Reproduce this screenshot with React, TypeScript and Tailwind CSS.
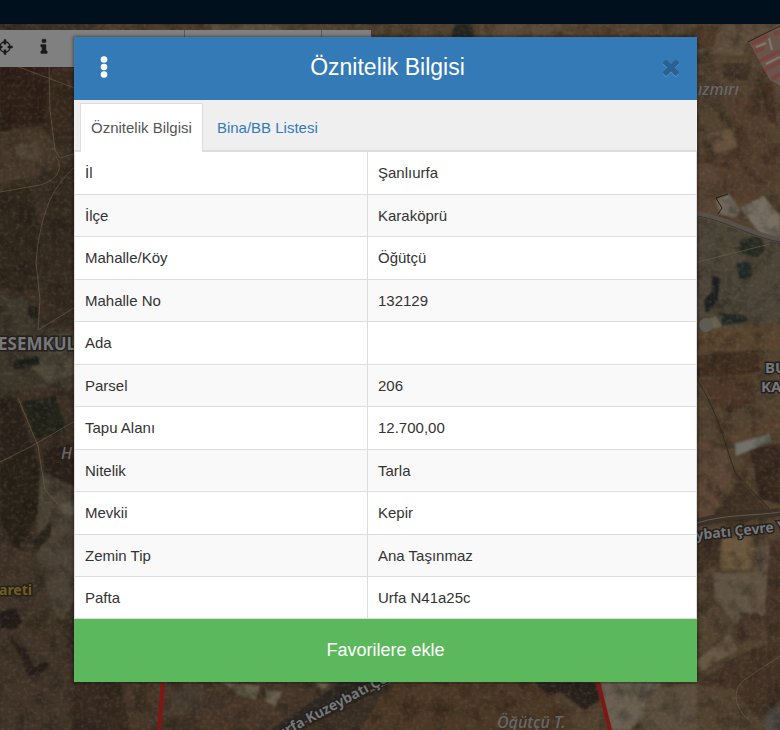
import React from 'react';

const ROWS = [
  { label: 'İl', value: 'Şanlıurfa' },
  { label: 'İlçe', value: 'Karaköprü' },
  { label: 'Mahalle/Köy', value: 'Öğütçü' },
  { label: 'Mahalle No', value: '132129' },
  { label: 'Ada', value: '' },
  { label: 'Parsel', value: '206' },
  { label: 'Tapu Alanı', value: '12.700,00' },
  { label: 'Nitelik', value: 'Tarla' },
  { label: 'Mevkii', value: 'Kepir' },
  { label: 'Zemin Tip', value: 'Ana Taşınmaz' },
  { label: 'Pafta', value: 'Urfa N41a25c' },
];

// Land patches: [fill, polygon points]
const FIELDS: [string, string][] = [
  ['#37291d', '0,60 80,60 80,150 60,130 0,140'],
  ['#2e1f17', '0,67 50,67 44,120 0,132'],
  ['#45382a', '0,132 40,126 60,150 50,172 0,184'],
  ['#4f4333', '14,146 38,140 40,160 18,166'],
  ['#2f261c', '0,190 28,184 44,240 36,290 0,288'],
  ['#352a20', '52,170 80,160 80,330 44,310 40,240'],
  ['#3d362b', '0,290 30,300 60,340 80,345 80,390 0,390'],
  ['#4c4538', '36,338 80,330 80,372 50,384 30,366'],
  ['#211f19', '28,306 38,306 38,318 28,318'],
  ['#1d2019', '12,362 38,356 40,364 14,370'],
  ['#2a211a', '0,398 18,400 32,446 0,462'],
  ['#23231a', '22,402 56,396 66,430 36,440'],
  ['#2a2019', '42,450 70,444 80,470 80,500 48,490'],
  ['#282118', '0,464 34,446 44,500 30,530 18,550 0,520'],
  ['#4a4034', '40,470 80,490 80,590 62,622 40,600 36,550'],
  ['#56503f', '58,504 80,498 80,516 62,514'],
  ['#271e18', '12,536 26,552 22,558 12,548'],
  ['#2a231a', '34,540 52,520 50,536 36,552'],
  ['#403327', '0,540 36,556 62,634 74,682 74,730 0,730'],
  ['#231b18', '0,612 16,608 22,622 16,630 0,628'],
  ['#281e1a', '6,632 14,642 26,648 34,668 46,660 50,664 40,674 28,676 18,652'],
  ['#3b3023', '0,24 100,24 90,30 0,30'],
  ['#4d3a2a', '96,24 210,24 210,38 90,38'],
  ['#5a4d3b', '210,24 290,24 280,38 215,38'],
  ['#4e4030', '290,24 390,24 400,38 280,38'],
  ['#26251f', '454,24 472,24 474,38 452,38'],
  ['#5b4a38', '480,24 560,24 570,38 480,38'],
  ['#54412f', '570,24 660,24 670,38 580,38'],
  ['#5d4d3b', '697,24 780,24 780,40 748,42 742,56 697,52'],
  ['#4b3827', '697,24 718,26 714,46 697,50'],
  ['#43352a', '724,64 750,62 748,82 722,76'],
  ['#4b3c2d', '697,86 718,78 722,104 704,110'],
  ['#523d2d', '726,100 758,96 772,140 780,150 780,180 740,204 706,168 704,158 740,146'],
  ['#65503d', '704,136 730,128 738,146 716,154'],
  ['#432f23', '760,84 772,82 778,126 768,120'],
  ['#574433', '697,156 712,166 736,204 750,196 736,214 697,214'],
  ['#776e62', '740,208 764,196 780,216 780,240 762,236'],
  ['#70685b', '716,200 728,192 740,210 736,218 720,214'],
  ['#4b4437', '697,214 780,240 780,330 697,330'],
  ['#272b24', '740,240 760,236 766,250 756,258 740,252'],
  ['#202a24', '736,264 750,260 752,276 740,280'],
  ['#1d1e1f', '712,276 720,278 718,300 706,314 704,300 712,292'],
  ['#212823', '720,312 746,316 748,322 722,325'],
  ['#68614f', '702,322 716,316 722,326 710,332 702,332'],
  ['#59452f', '697,330 780,322 780,350 697,352'],
  ['#412f22', '697,356 758,350 760,372 697,378'],
  ['#4c3627', '700,380 752,376 756,400 728,414 716,404'],
  ['#57422f', '728,436 780,410 780,428 732,448'],
  ['#70706a', '734,444 770,434 771,442 736,456'],
  ['#5b4534', '697,440 724,448 734,474 710,520 697,522'],
  ['#3f3124', '710,520 740,480 776,518 700,526'],
  ['#38291f', '750,450 780,444 780,504 760,500'],
  ['#6b573e', '722,538 752,536 756,556 750,570 720,568'],
  ['#3f3024', '697,534 720,538 718,564 697,574'],
  ['#5f5344', '712,574 752,572 754,612 736,624 716,600'],
  ['#605242', '754,548 772,544 768,610 752,626'],
  ['#453427', '770,540 780,540 780,640 764,628'],
  ['#655742', '697,660 730,634 738,650 700,672'],
  ['#4a382a', '740,612 760,614 762,640 736,642'],
  ['#443325', '697,684 740,654 780,640 780,700 760,722 735,690'],
  ['#4b4842', '768,708 780,706 780,730 764,730'],
  ['#463629', '74,682 340,682 280,730 74,730'],
  ['#36291f', '74,682 120,682 130,730 74,730'],
  ['#453a2f', '170,690 205,684 200,712 170,716'],
  ['#655b48', '222,682 260,686 256,700 238,694'],
  ['#6a6150', '266,690 282,692 276,706 266,702'],
  ['#6a604c', '315,682 330,684 322,690'],
  ['#2b2620', '340,682 395,682 300,730 270,730'],
  ['#4a3725', '390,682 540,682 580,730 360,730'],
  ['#2a211c', '535,682 596,682 600,700 584,710 560,692 548,696'],
  ['#696052', '600,682 660,682 664,700 630,730 610,730'],
  ['#5a4e3f', '648,690 697,684 697,730 640,730'],
];

const ROADS = [
  'M49 66 50 110 55 150 60 158 80 152',
  'M56 156 C66 172 52 184 34 186 L0 192',
  'M80 162 C50 188 44 210 38 244 L36 262 40 300 38 330',
  'M38 330 80 304',
  'M0 462 32 446 80 418',
  'M18 398 38 446 45 490 58 504',
  'M16 66 80 90',
  'M780 656 744 680 C730 692 736 712 752 722',
  'M697 262 770 244',
];

const Patch: React.FC<{ fill: string; points: string }> = ({ fill, points }) => (
  <polygon fill={fill} points={points} />
);

const SatelliteMap: React.FC = () => (
  <svg
    className="absolute inset-0 h-full w-full font-['Noto_Sans',sans-serif]"
    viewBox="0 0 780 730"
    preserveAspectRatio="xMidYMid slice"
    aria-hidden="true"
  >
    <defs>
      <filter id="soft" x="0" y="0" width="100%" height="100%" colorInterpolationFilters="sRGB">
        <feGaussianBlur stdDeviation="1" />
      </filter>
      <filter id="coarse" x="0" y="0" width="100%" height="100%" colorInterpolationFilters="sRGB">
        <feTurbulence type="fractalNoise" baseFrequency="0.06" numOctaves="5" seed="7" />
        <feColorMatrix values="0 0 0 0 0.09  0 0 0 0 0.08  0 0 0 0 0.06  2.6 0 0 0 -1.15" />
      </filter>
      <filter id="grain" x="0" y="0" width="100%" height="100%" colorInterpolationFilters="sRGB">
        <feTurbulence type="fractalNoise" baseFrequency="0.25" numOctaves="3" seed="3" />
        <feColorMatrix values="0 0 0 0 0.5  0 0 0 0 0.46  0 0 0 0 0.38  0 1.8 0 0 -0.8" />
      </filter>
    </defs>
    <rect width="780" height="730" fill="#3b2f24" />
    <rect x="390" width="390" height="730" fill="#51412f" />
    <g filter="url(#soft)">
      {FIELDS.map(([fill, points]) => (
        <Patch key={points} fill={fill} points={points} />
      ))}
    </g>
    <rect width="780" height="730" filter="url(#coarse)" opacity="0.4" />
    <rect width="780" height="730" filter="url(#grain)" opacity="0.3" />

    {/* Red roofs */}
    <g>
      <polygon points="749,42 780,26 780,86 770,80" fill="#68564c" />
      <path d="M751 44 768 36M754 52 764 48M760 61 780 51M764 70 780 62M772 79 780 74M774 34 780 32" stroke="#79423c" strokeWidth="4" />
      <path d="M756 47 766 43M766 64 780 57M769 38 772 50" stroke="#83786b" strokeWidth="2" />
      <path d="M748 42 780 26" stroke="#28231e" />
    </g>

    <g fill="none" stroke="#6e624c" strokeWidth="1" opacity="0.6">
      {ROADS.map((d) => (
        <path key={d} d={d} />
      ))}
    </g>
    <path d="M697 214 C725 218 750 235 780 240" fill="none" stroke="#57514a" strokeWidth="6" />
    <path d="M697 216 C725 220 750 237 780 242" fill="none" stroke="#3b352e" strokeWidth="1" />
    <path d="M697 380 C718 410 726 450 736 474 L776 516" fill="none" stroke="#302820" strokeWidth="1" />
    <path d="M697 523 C725 514 755 516 780 512" fill="none" stroke="#3b3126" strokeWidth="8" />
    <path d="M697 523 C725 514 755 516 780 512" fill="none" stroke="#65594a" strokeWidth="1" />
    <path d="M716 198 728 194M716 198 722 208 718 214" fill="none" stroke="#1d1b18" strokeWidth="1" />
    <circle cx="706" cy="325" r="7" fill="#5c5b54" />
    <path d="M390 682 280 734" stroke="#5c5040" strokeWidth="2" />

    {/* Parcel borders */}
    <path d="M163 682 159 730M598 682 610 730" stroke="#801716" strokeWidth="4" />

    <g fill="#77777a" stroke="#24211e" strokeWidth="3" paintOrder="stroke" fontWeight="700">
      <text x="-2" y="350" fontSize="17">ESEMKUL</text>
      <text x="765" y="373" fontSize="15">BU</text>
      <text x="761" y="392" fontSize="15">KA</text>
      <text x="696" y="540" fontSize="14" transform="rotate(-6 696 540)">ybatı Çevre Y</text>
      <text x="280" y="739" fontSize="14" transform="rotate(-28 280 739)">urfa Kuzeybatı Çevre</text>
      <text x="-1" y="595" fontSize="14" fill="#6f5f1b">areti</text>
    </g>
    <g fill="#68676a" fontStyle="italic" fontWeight="500">
      <text x="698" y="95" fontSize="16">ızmırı</text>
      <text x="61" y="459" fontSize="16">H</text>
      <text x="497" y="728" fontSize="16">Öğütçü T.</text>
    </g>
  </svg>
);

interface GlyphProps {
  d: string;
  className?: string;
}

const Glyph: React.FC<GlyphProps> = ({ d, className }) => (
  <svg viewBox="0 0 1792 1792" fill="currentColor" className={className} aria-hidden="true">
    <path d={d} />
  </svg>
);

const CROSSHAIRS =
  'M1325 1024h-109q-26 0-45-19t-19-45v-128q0-26 19-45t45-19h109q-32-108-112.500-188.500t-188.500-112.500v109q0 26-19 45t-45 19h-128q-26 0-45-19t-19-45v-109q-108 32-188.500 112.500t-112.500 188.500h109q26 0 45 19t19 45v128q0 26-19 45t-45 19h-109q32 108 112.500 188.500t188.500 112.500v-109q0-26 19-45t45-19h128q26 0 45 19t19 45v109q108-32 188.500-112.500t112.500-188.500zm339-192v128q0 26-19 45t-45 19h-143q-37 161-154.500 278.500t-278.500 154.500v143q0 26-19 45t-45 19h-128q-26 0-45-19t-19-45v-143q-161-37-278.500-154.500t-154.500-278.500h-143q-26 0-45-19t-19-45v-128q0-26 19-45t45-19h143q37-161 154.500-278.500t278.500-154.500v-143q0-26 19-45t45-19h128q26 0 45 19t19 45v143q161 37 278.500 154.500t154.500 278.500h143q26 0 45 19t19 45z';
const INFO =
  'M1216 1344v128q0 26-19 45t-45 19h-512q-26 0-45-19t-19-45v-128q0-26 19-45t45-19h64v-384h-64q-26 0-45-19t-19-45v-128q0-26 19-45t45-19h384q26 0 45 19t19 45v576h64q26 0 45 19t19 45zm-128-1152v192q0 26-19 45t-45 19h-256q-26 0-45-19t-19-45v-192q0-26 19-45t45-19h256q26 0 45 19t19 45z';
const TIMES =
  'M1490 1322q0 40-28 68l-136 136q-28 28-68 28t-68-28l-294-294-294 294q-28 28-68 28t-68-28l-136-136q-28-28-28-68t28-68l294-294-294-294q-28-28-28-68t28-68l136-136q28-28 68-28t68 28l294 294 294-294q28-28 68-28t68 28l136 136q28 28 28 68t-28 68l-294 294 294 294q28 28 28 68z';

const Toolbar: React.FC = () => (
  <div className="absolute top-[30px] left-0 flex h-[37px] w-[371px] bg-[#808080] text-[#1a1a1a]">
    <button type="button" aria-label="Konum" className="-ml-1 flex w-[18px] shrink-0 justify-center pt-2">
      <Glyph d={CROSSHAIRS} className="size-[18px] shrink-0" />
    </button>
    <button type="button" aria-label="Bilgi" className="ml-[21px] flex w-[18px] shrink-0 justify-center pt-2">
      <Glyph d={INFO} className="size-[18px] stroke-current stroke-[50]" />
    </button>
    <div className="ml-[131px] h-full w-[138px] border-x border-[#5c5c5c]" />
  </div>
);

export default function App() {
  return (
    <div className="relative min-h-screen overflow-hidden bg-[#3b2f24] font-['Liberation_Sans',Arial,sans-serif] text-[15px] leading-5 text-[#333]">
      <SatelliteMap />
      <div className="absolute inset-x-0 top-0 h-6 bg-[#00101c]" />
      <Toolbar />

      <div className="relative pt-[37px] pr-[83px] pb-12 pl-[74px]">
        <section role="dialog" aria-labelledby="title" className="bg-white shadow-[0_0_3px_1px_rgba(0,0,0,0.4)]">
          <header className="flex h-[63px] items-center justify-between bg-[#337ab7] px-4 pb-[3px] text-white">
            <button type="button" aria-label="Menü" className="flex w-7 justify-center">
              <svg viewBox="0 0 8 22" className="h-[22px] w-2" fill="currentColor" aria-hidden="true">
                <circle cx="4" cy="3.500" r="3.300" />
                <circle cx="4" cy="11" r="3.300" />
                <circle cx="4" cy="18.500" r="3.300" />
              </svg>
            </button>
            <h1 id="title" className="text-[23px] leading-8">Öznitelik Bilgisi</h1>
            <button type="button" aria-label="Kapat" className="-mr-1 flex w-7 justify-center text-[#296292]">
              <Glyph d={TIMES} className="size-6 drop-shadow-[0_1px_0_#5c95c5]" />
            </button>
          </header>

          <div role="tablist" className="flex h-[52px] items-end border-b-2 border-[#ddd] bg-[#efefef] pl-1.5">
            <button
              type="button"
              role="tab"
              aria-selected="true"
              className="-mb-0.5 h-[49px] border border-b-0 border-[#ddd] bg-white px-2.5 text-[#555]"
            >
              Öznitelik Bilgisi
            </button>
            <button type="button" role="tab" aria-selected="false" className="-mb-0.5 h-[49px] px-3.5 text-[#337ab7]">
              Bina/BB Listesi
            </button>
          </div>

          <table className="w-full table-fixed border-separate border-spacing-0 border-l border-[#ddd]">
            <tbody>
              {ROWS.map((row) => (
                <tr key={row.label} className="odd:h-[43px] even:h-[42px] last:h-[42px]! even:bg-[#f9f9f9]">
                  <th scope="row" className="w-[293px] border-r border-b border-[#ddd] px-2.5 text-left font-normal">
                    {row.label}
                  </th>
                  <td className="border-r border-b border-[#ddd] px-2.5">{row.value}</td>
                </tr>
              ))}
            </tbody>
          </table>

          <button type="button" className="block h-[63px] w-full bg-[#5cb85c] pb-0.5 text-lg text-white">
            Favorilere ekle
          </button>
        </section>
      </div>
    </div>
  );
}
